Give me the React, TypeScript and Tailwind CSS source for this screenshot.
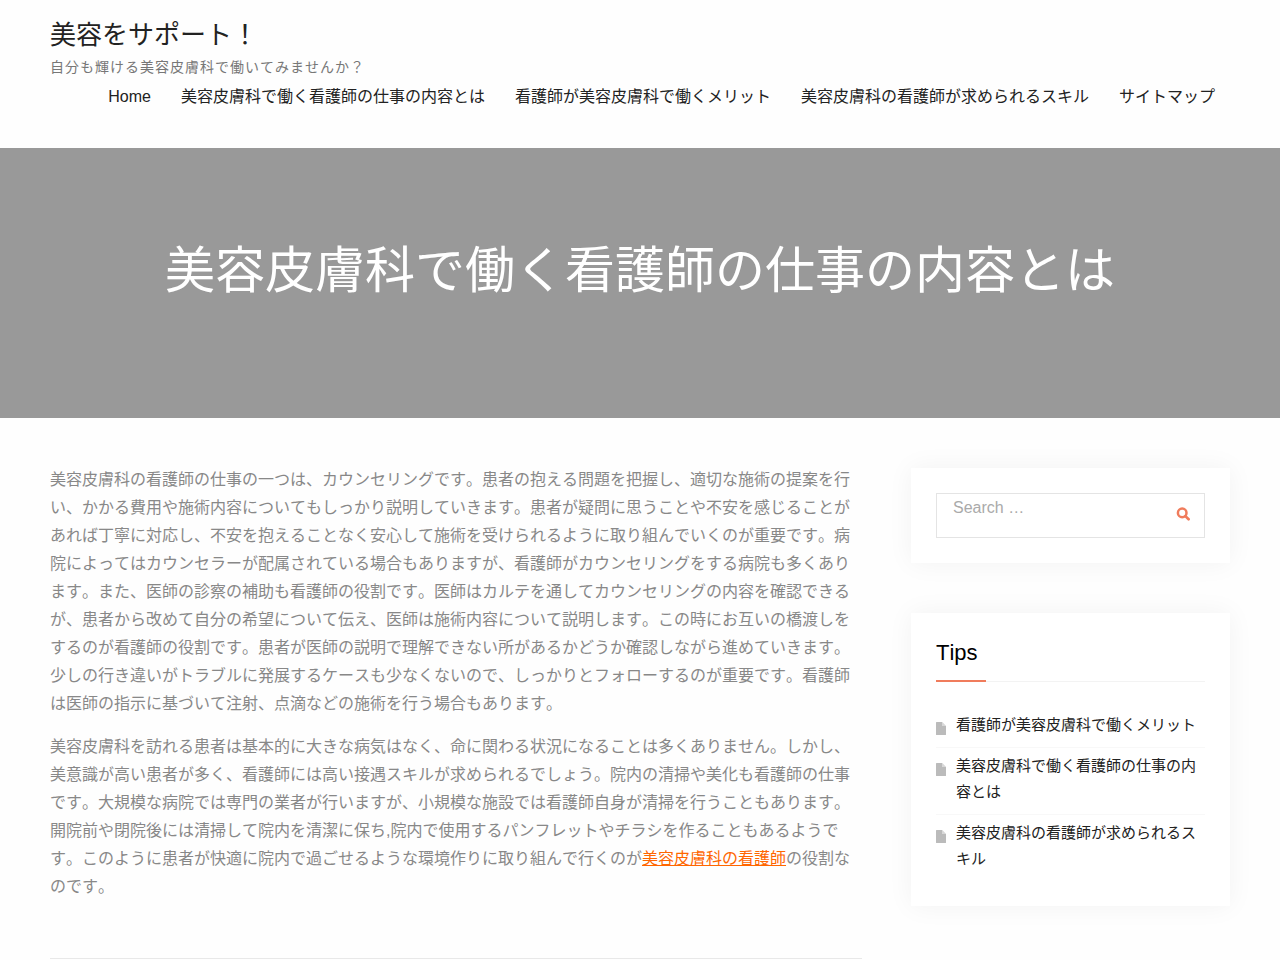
const NAV_ITEMS = [
  "Home",
  "美容皮膚科で働く看護師の仕事の内容とは",
  "看護師が美容皮膚科で働くメリット",
  "美容皮膚科の看護師が求められるスキル",
  "サイトマップ",
];

const TIPS = [
  "看護師が美容皮膚科で働くメリット",
  "美容皮膚科で働く看護師の仕事の内容とは",
  "美容皮膚科の看護師が求められるスキル",
];

function SearchIcon() {
  return (
    <svg viewBox="0 0 14 14" className="h-3.5 w-3.5" fill="none" stroke="currentColor" aria-hidden="true">
      <circle cx="6.2" cy="5.9" r="4.3" strokeWidth="2.5" />
      <path d="M9.4 9.1l3.2 3.2" strokeWidth="2.7" strokeLinecap="round" />
    </svg>
  );
}

function FileIcon() {
  return (
    <svg viewBox="0 0 10 13" className="mt-[9.5px] mr-[10px] h-[13px] w-[10px] shrink-0" aria-hidden="true">
      <path fill="#bbb" d="M.6 0H6v3.4c0 .4.2.6.6.6H10v8.4c0 .4-.2.6-.6.6H.6c-.4 0-.6-.2-.6-.6V.6C0 .2.2 0 .6 0z" />
      <path fill="#d8d8d8" d="M6 0h.3L10 3.7V4H6.6c-.4 0-.6-.2-.6-.6z" />
    </svg>
  );
}

function Header() {
  return (
    <header className="flex h-[148px] flex-col px-[50px] pt-[15px]">
      <h1 className="text-[26px] leading-10 text-[#222]">
        <a href="#">美容をサポート！</a>
      </h1>
      <p className="text-sm leading-6 tracking-[1px] text-[#777]">
        自分も輝ける美容皮膚科で働いてみませんか？
      </p>
      <nav className="mt-1 flex justify-end gap-[30px] pr-[15px] text-base leading-7 whitespace-nowrap text-[#222]">
        {NAV_ITEMS.map((item) => (
          <a key={item} href="#">
            {item}
          </a>
        ))}
      </nav>
    </header>
  );
}

function Hero() {
  return (
    <section className="flex h-[270px] items-center justify-center bg-[#999] pb-6">
      <h2 className="text-[50px] leading-[60px] whitespace-nowrap text-white">
        美容皮膚科で働く看護師の仕事の内容とは
      </h2>
    </section>
  );
}

function Article() {
  return (
    <article className="h-[493px] w-[812px] border-b border-[#e8e8e8] text-base leading-7 text-[#888]">
      <p className="mb-[15px]">
        美容皮膚科の看護師の仕事の一つは、カウンセリングです。患者の抱える問題を把握し、適切な施術の提案を行い、かかる費用や施術内容についてもしっかり説明していきます。患者が疑問に思うことや不安を感じることがあれば丁寧に対応し、不安を抱えることなく安心して施術を受けられるように取り組んでいくのが重要です。病院によってはカウンセラーが配属されている場合もありますが、看護師がカウンセリングをする病院も多くあります。また、医師の診察の補助も看護師の役割です。医師はカルテを通してカウンセリングの内容を確認できるが、患者から改めて自分の希望について伝え、医師は施術内容について説明します。この時にお互いの橋渡しをするのが看護師の役割です。患者が医師の説明で理解できない所があるかどうか確認しながら進めていきます。少しの行き違いがトラブルに発展するケースも少なくないので、しっかりとフォローするのが重要です。看護師は医師の指示に基づいて注射、点滴などの施術を行う場合もあります。
      </p>
      <p>
        美容皮膚科を訪れる患者は基本的に大きな病気はなく、命に関わる状況になることは多くありません。しかし、美意識が高い患者が多く、看護師には高い接遇スキルが求められるでしょう。院内の清掃や美化も看護師の仕事です。大規模な病院では専門の業者が行いますが、小規模な施設では看護師自身が清掃を行うこともあります。開院前や閉院後には清掃して院内を清潔に保ち,院内で使用するパンフレットやチラシを作ることもあるようです。このように患者が快適に院内で過ごせるような環境作りに取り組んで行くのが
        <a href="#" className="text-[#f60] underline">
          美容皮膚科の看護師
        </a>
        の役割なのです。
      </p>
    </article>
  );
}

function SearchWidget() {
  return (
    <section className="bg-white p-[25px] shadow-[0_0_25px_rgba(0,0,0,0.05)]">
      <form className="flex h-[45px] border border-[#e4e4e4]">
        <input
          type="search"
          placeholder="Search …"
          className="h-7 min-w-0 flex-1 pl-4 text-base leading-7 outline-none placeholder:text-[#aaa]"
        />
        <button
          type="button"
          aria-label="Search"
          className="flex w-[42px] items-center justify-center pb-[3px] text-[#f07c5c]"
        >
          <SearchIcon />
        </button>
      </form>
    </section>
  );
}

function TipsWidget() {
  return (
    <section className="h-[293px] bg-white p-[25px] shadow-[0_0_25px_rgba(0,0,0,0.05)]">
      <h3 className="h-11 border-b border-[#f3f3f3] text-[22px] leading-[30px] text-black">
        <span className="block h-11 w-[50px] border-b-2 border-[#f07c5c]">Tips</span>
      </h3>
      <ul className="mt-[25px] text-[15px] leading-[26px] text-[#222]">
        {TIPS.map((tip) => (
          <li key={tip} className="flex border-b border-[#f8f8f8] pt-[5px] pb-[9px] last:border-b-0">
            <FileIcon />
            <a href="#">{tip}</a>
          </li>
        ))}
      </ul>
    </section>
  );
}

export default function App() {
  return (
    <div
      lang="ja"
      className="h-[960px] w-[1280px] overflow-hidden bg-[#fefefe] font-['Liberation_Sans','Noto_Sans_CJK_JP',sans-serif] [font-kerning:none]"
    >
      <Header />
      <Hero />
      <main className="flex items-start justify-between px-[50px] pt-12">
        <Article />
        <aside className="mt-0.5 flex w-[319px] flex-col gap-[50px]">
          <SearchWidget />
          <TipsWidget />
        </aside>
      </main>
    </div>
  );
}
